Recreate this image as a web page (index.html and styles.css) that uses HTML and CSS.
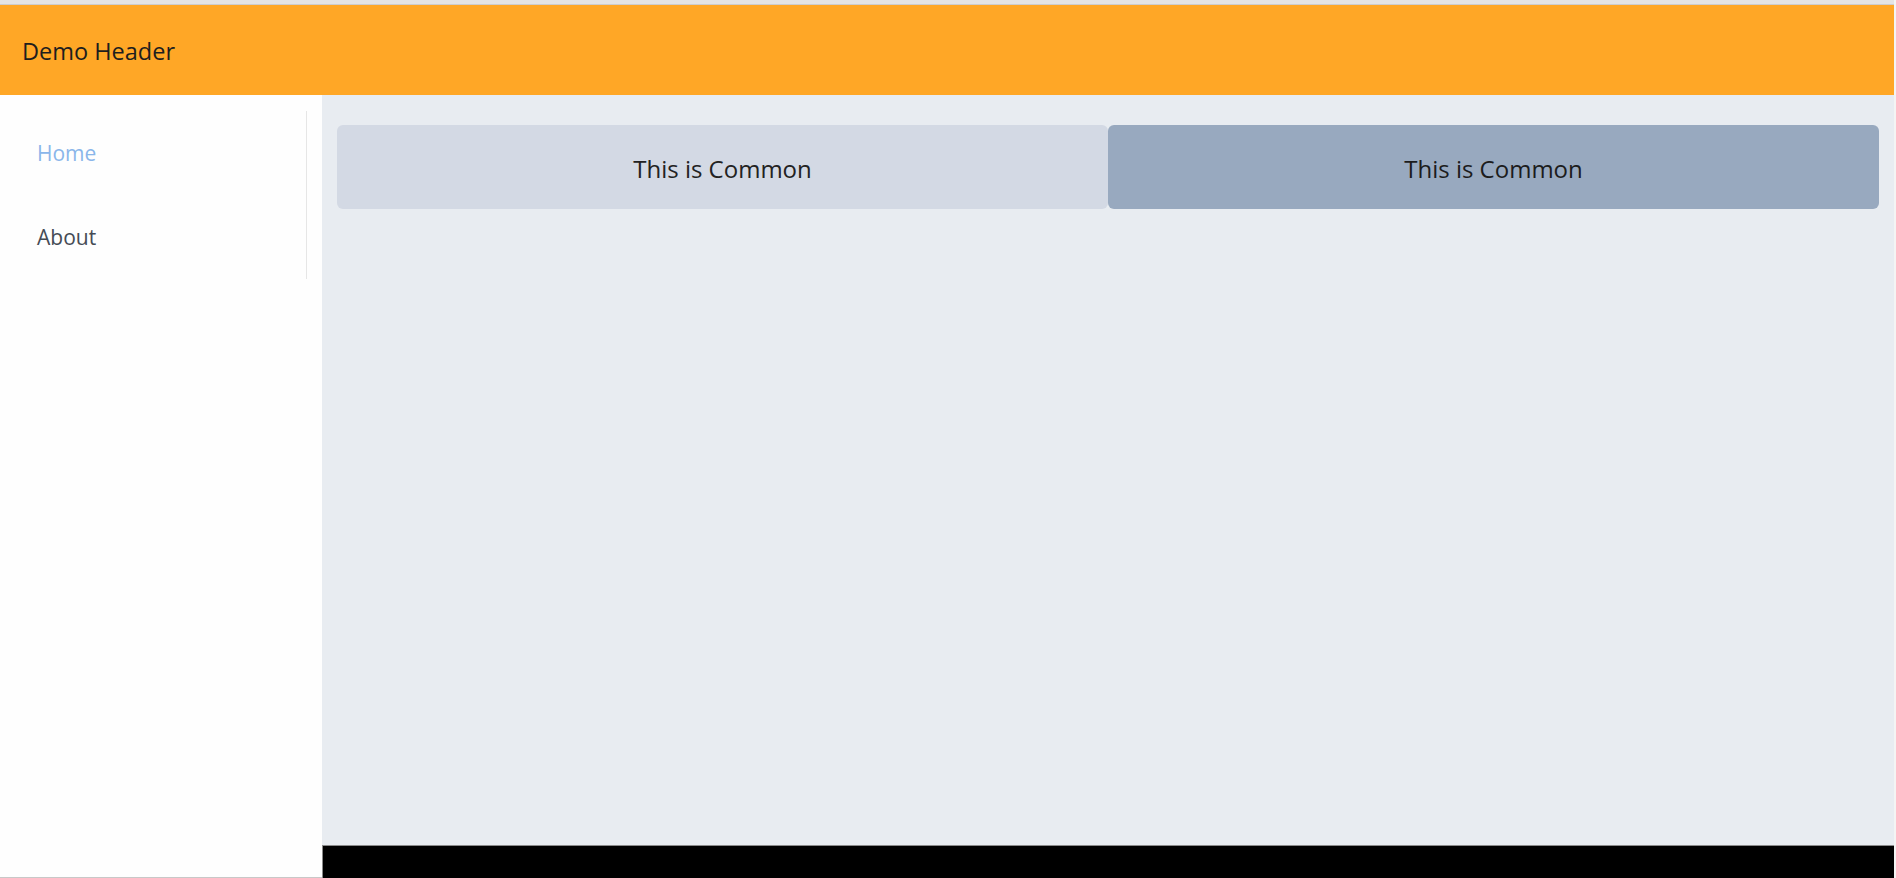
FILE: index.html
```html
<!DOCTYPE html>
<html lang="en">
<head>
<meta charset="utf-8">
<title>Demo</title>
<link rel="stylesheet" href="styles.css">
</head>
<body>
<div class="app">
  <div class="topline"></div>
  <header class="header">Demo Header</header>
  <div class="layout">
    <aside class="sidebar">
      <nav class="nav">
        <a class="nav-item active">Home</a>
        <a class="nav-item">About</a>
      </nav>
    </aside>
    <main class="main">
      <div class="content">
        <div class="cards">
          <div class="card card-light">This is Common</div>
          <div class="card card-dark">This is Common</div>
        </div>
      </div>
      <footer class="footer"></footer>
    </main>
  </div>
</div>
</body>
</html>
```

FILE: styles.css
```css
html, body {
  margin: 0;
  padding: 0;
  height: 100%;
}
body {
  background: #f4f4f4;
  font-family: "Open Sans", "Noto Sans", sans-serif;
  overflow: hidden;
}
.app {
  width: 1894px;
  height: 878px;
  display: flex;
  flex-direction: column;
  background: #fefefe;
}
.topline {
  height: 4px;
  background: #e4e4e4;
  border-bottom: 1px solid #cdcdcd;
  flex: none;
}
.header {
  height: 90px;
  flex: none;
  background: #ffa726;
  color: #1e1e1e;
  font-size: 23.5px;
  padding-left: 22px;
  display: flex;
  align-items: center;
  padding-top: 1px;
  box-sizing: border-box;
}
.layout {
  flex: 1;
  display: flex;
  min-height: 0;
}
.sidebar {
  width: 322px;
  flex: none;
  background: #fefefe;
  padding-top: 16px;
  box-sizing: border-box;
  border-bottom: 1px solid #c8c8c8;
}
.nav {
  width: 307px;
  border-right: 1px solid #e6e6e6;
  display: flex;
  flex-direction: column;
  box-sizing: border-box;
}
.nav-item {
  height: 84px;
  display: flex;
  align-items: center;
  padding-left: 37px;
  font-size: 21px;
  color: #454b55;
  cursor: pointer;
}
.nav-item.active {
  color: #8ab6ea;
}
.main {
  flex: 1;
  display: flex;
  flex-direction: column;
  background: #e8ecf1;
  min-width: 0;
}
.content {
  flex: 1;
  padding: 30px 15px 0 15px;
}
.cards {
  display: flex;
  height: 84px;
}
.card {
  flex: 1;
  display: flex;
  align-items: center;
  justify-content: center;
  border-radius: 6px;
  font-size: 24px;
  padding-top: 2px;
  box-sizing: border-box;
  color: #222;
}
.card-light {
  background: #d3d9e4;
}
.card-dark {
  background: #98a9bf;
  color: #1c1c1c;
}
.footer {
  height: 32px;
  flex: none;
  background: #000;
  border-top: 1px solid #8a8a8a;
  border-left: 1px solid #8a8a8a;
}
```
